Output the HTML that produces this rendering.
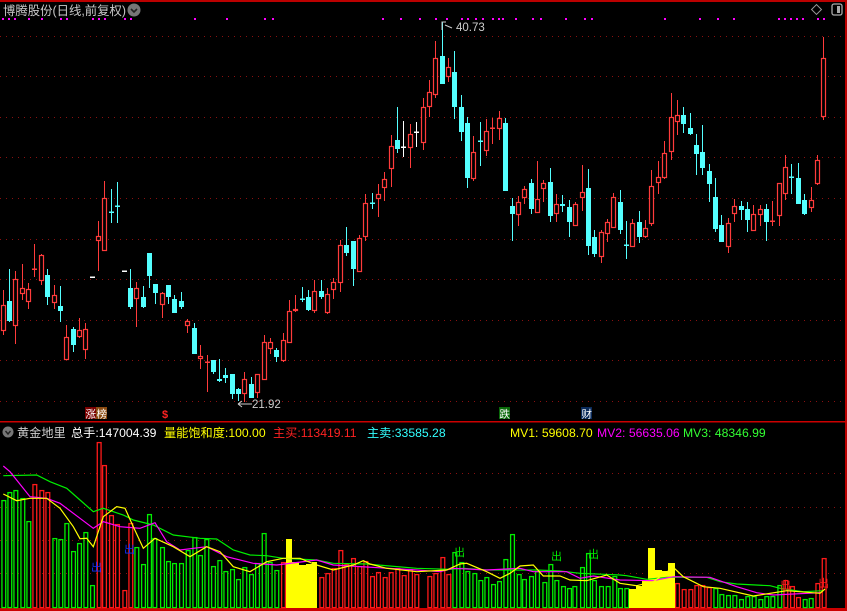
<!DOCTYPE html>
<html><head><meta charset="utf-8"><style>
html,body{margin:0;padding:0;background:#000;width:847px;height:611px;overflow:hidden}
svg{display:block}
text{font-family:"Liberation Sans","Noto Sans CJK SC",sans-serif}
</style></head><body>
<svg id="s" width="847" height="611" viewBox="0 0 847 611" xmlns="http://www.w3.org/2000/svg">
<rect width="847" height="611" fill="#000"/>
<rect x="0" y="0" width="847" height="2" fill="#b00"/>
<rect x="845" y="0" width="2" height="611" fill="#b00"/>
<rect x="0" y="421" width="847" height="1.5" fill="#c00"/>
<rect x="0" y="608" width="847" height="3" fill="#c00"/>
<g id="grid" stroke="#8a1010" stroke-width="1" stroke-dasharray="1,5"></g>
<text x="3" y="15" font-size="12.5" fill="#c8c8c8" textLength="123" lengthAdjust="spacingAndGlyphs">博腾股份(日线,前复权)</text>
<circle cx="134" cy="10" r="6.5" fill="#777"/>
<path d="M131 9 L134 12 L137 9" stroke="#222" stroke-width="1.6" fill="none"/>
<rect x="813" y="6" width="7" height="7" fill="none" stroke="#999" transform="rotate(45 816.5 9.5)"/>
<rect x="832" y="4" width="10" height="11" rx="2" fill="none" stroke="#aaa" stroke-width="1.3"/>
<rect x="837" y="6" width="3" height="7" fill="#aaa"/>
<g id="dots" fill="#ff00ff"></g>
<g id="candles"></g>
<g id="vol"></g>
<path d="M442 30 L442 22 L446 22 M445 25 L452 28" stroke="#ccc" fill="none"/>
<text x="456" y="31" font-size="11.5" fill="#ccc">40.73</text>
<path d="M238 404 L252 404 M238 404 L242 401 M238 404 L242 407" stroke="#ccc" fill="none"/>
<text x="252" y="408" font-size="11.5" fill="#ccc">21.92</text>
<rect x="85" y="407" width="11" height="12" fill="#7a0000"/><text x="85.5" y="417.5" font-size="10.5" fill="#fff">涨</text>
<rect x="96" y="407" width="11" height="12" fill="#8a4a10"/><text x="96.5" y="417.5" font-size="10.5" fill="#fff">榜</text>
<text x="162" y="418" font-size="11" fill="#f22" font-weight="bold">$</text>
<rect x="499" y="407" width="11" height="12" fill="#0a6a0a"/><text x="499.5" y="417.5" font-size="10.5" fill="#fff">跌</text>
<rect x="581" y="407" width="11" height="12" fill="#0a2a5a"/><text x="581.5" y="417.5" font-size="10.5" fill="#fff">财</text>
<circle cx="8" cy="432" r="5.5" fill="#777"/>
<path d="M5.5 431 L8 434 L10.5 431" stroke="#222" stroke-width="1.4" fill="none"/>
<g font-size="12.2">
<text x="17" y="437" fill="#ccc">黄金地里</text>
<text x="71" y="437" fill="#fff">总手:147004.39</text>
<text x="164" y="437" fill="#ff0">量能饱和度:100.00</text>
<text x="273" y="437" fill="#f22">主买:113419.11</text>
<text x="367" y="437" fill="#3ff">主卖:33585.28</text>
<text x="510" y="437" fill="#ff0">MV1: 59608.70</text>
<text x="597" y="437" fill="#f0f">MV2: 56635.06</text>
<text x="683" y="437" fill="#3f3">MV3: 48346.99</text>
</g>
</svg>
<script>
var NS="http://www.w3.org/2000/svg";
function el(p,t,a){var e=document.createElementNS(NS,t);for(var k in a)e.setAttribute(k,a[k]);document.getElementById(p).appendChild(e);return e;}
[36,76,117,157,198,239,279,320,360,401,473,507,540,573].forEach(function(y){el("grid","line",{x1:0,y1:y+.5,x2:845,y2:y+.5});});
var dx=[2,8,14,28,41,60,66,92,98,104,124,130,194,226,264,272,382,400,419,435,446,461,467,475,482,492,498,502,515,532,540,565,584,591,664,699,717,733,778,784,790,796,802,817,823];
dx.forEach(function(x){el("dots","rect",{x:x,y:18,width:2,height:2});});
var C=[
[3.3,"r",305,331,290,335],[9.3,"c",301,321,269,322],[15.3,"r",279,326,271,344],[22.3,"r",288,294,264,300],[28.3,"r",289,302,283,309],[34.3,"r",269,269,244,277],[41.3,"r",255,281,254,285],[47.3,"c",275,297,269,305],[54.3,"r",295,303,285,309],[60.3,"c",306,311,286,322],[66.3,"r",337,360,325,360],[73.3,"c",329,345,327,352],[79.3,"r",330,337,318,338],[85.3,"r",329,350,323,359],[91.7,"w",277,277,277,277],[98.3,"r",236,241,221,271],[104.3,"r",198,251,181,251],[111.3,"c",212,212,189,223],[117.3,"c",206,206,182,223],[123.7,"w",271,271,271,271],[130.3,"c",288,307,269,309],[136.3,"r",288,299,282,327],[143.3,"c",297,307,286,308],[149.3,"c",253,276,253,288],[155.3,"c",284,293,284,304],[162.3,"r",293,305,292,318],[168.3,"c",285,297,285,304],[174.3,"c",299,313,295,313],[181.3,"c",301,307,292,309],[187.3,"r",321,326,319,333],[194.3,"c",328,354,323,354],[200.3,"r",356,359,345,369],[206.7,"r",362,362,355,392],[213.3,"c",360,372,360,374],[219.3,"c",379,381,359,382],[225.3,"c",375,378,368,383],[232.3,"c",374,394,374,399],[238.3,"c",389,394,388,401],[244.3,"r",379,394,372,402],[251.3,"c",384,398,377,398],[257.3,"r",374,393,374,398],[263.7,"r",342,380,335,380],[270.3,"r",342,349,338,354],[276.3,"c",350,357,348,362],[283.3,"r",340,361,333,362],
[289.3,"r",311,343,300,343],[295.3,"r",309,311,295,312],[301.7,"c",299,299,287,302],[308.3,"c",297,310,290,311],[314.3,"r",291,311,280,313],[321.3,"c",291,297,280,299],[327.3,"r",294,313,288,314],[333.3,"r",282,290,278,299],[340.3,"r",245,283,240,292],[346.3,"c",245,253,227,256],[353.3,"c",241,269,241,286],[359.3,"r",238,272,235,272],[365.3,"r",203,237,194,241],[372.3,"c",203,203,193,209],[378.3,"r",194,199,184,217],[384.3,"r",179,188,172,201],[391.3,"r",146,169,135,187],[397.3,"c",140,149,107,153],[403.3,"w",147,147,121,157],[410.3,"r",134,148,124,168],[416.3,"w",132,132,122,147],[423.3,"r",107,143,98,150],[429.3,"r",92,107,80,117],[435.3,"r",58,95,41,98],[442.3,"c",56,84,22,84],[448.3,"r",67,77,58,82],[454.3,"c",72,107,51,119],[461.3,"c",107,132,95,141],[467.3,"c",123,178,117,188],[473.3,"r",152,179,136,181],[480.3,"c",141,141,122,166],[486.3,"r",131,151,119,156],[492.3,"r",128,128,118,144],[499.3,"r",118,129,111,140],[505.3,"c",123,191,118,191],[512.3,"c",206,214,198,241],[518.3,"r",202,215,196,226],[524.3,"r",189,198,186,204],[531.3,"c",183,209,179,214],[537.3,"r",199,213,161,213],[543.3,"r",183,189,180,202],[550.3,"c",182,216,168,222],[556.3,"r",204,214,194,222],[562.3,"c",204,206,195,212],
[569.3,"c",207,222,200,237],[575.3,"r",204,226,202,226],[582.3,"r",192,198,165,211],[588.3,"c",188,246,169,255],[594.3,"c",237,254,230,257],[601.3,"r",232,257,230,263],[607.3,"r",222,234,219,242],[613.3,"r",197,228,193,228],[620.3,"c",202,230,190,234],[626.3,"c",245,245,221,259],[632.3,"r",223,247,219,247],[639.3,"c",222,237,211,243],[645.3,"r",228,237,220,238],[651.3,"r",186,224,170,226],[658.3,"r",177,183,161,194],[664.3,"r",153,178,141,179],[671.3,"r",117,152,93,160],[677.3,"r",115,122,100,135],[683.3,"c",115,124,107,133],[690.3,"c",128,134,113,135],[696.3,"c",145,154,134,175],[702.3,"c",152,168,125,175],[709.3,"c",171,184,164,202],[715.3,"c",197,229,178,232],[721.3,"c",225,242,215,242],[728.3,"r",223,247,218,253],[734.3,"r",206,214,199,222],[741.3,"c",206,210,201,220],[747.3,"c",209,220,202,232],[753.3,"r",214,231,205,231],[760.3,"r",209,215,205,226],[766.3,"c",209,222,204,241],[772.3,"r",221,221,201,226],[779.3,"r",183,216,183,226],[785.3,"r",167,194,155,200],[791.3,"c",177,177,164,194],[798.3,"c",178,204,163,204],[804.3,"c",200,214,194,215],[811.3,"r",200,208,187,212],[817.3,"r",160,184,155,185],[823.3,"r",58,117,37,120]];
var col={r:"#ff3b3b",c:"#54ffff",w:"#ffffff"};
C.forEach(function(c){var x=Math.round(c[0])+.5,k=col[c[1]];
 if(c[5]>c[4])el("candles","line",{x1:x,y1:c[4],x2:x,y2:c[5],stroke:k,"stroke-width":1});
 if(c[3]-c[2]<2){el("candles","rect",{x:x-2.5,y:c[2]-.5,width:5,height:1.5,fill:k});}
 else if(c[1]=="r"){el("candles","rect",{x:x-2,y:c[2]+.5,width:4,height:c[3]-c[2]-1,fill:"#000",stroke:k,"stroke-width":1.2});}
 else el("candles","rect",{x:x-2.5,y:c[2],width:5,height:c[3]-c[2],fill:k});
});
var VA=[[4,500,"g"],[22,492,"g"],[40,490,"g"],[61,498,"g"],[79,521,"g"],[97,484,"r"],[118,490,"r"],[136,492,"r"],[157,538,"g"],[175,539,"g"],[193,523,"g"],[213,551,"g"],[231,543,"g"],[250,532,"g"],[270,585,"g"],[290,442,"r"],[306,465,"r"],[327,515,"r"],[345,524,"r"],[367,590,"r"],[385,523,"r"],[403,547,"g"],[423,564,"g"],[441,514,"g"],[457,538,"g"],[480,547,"g"],[498,561,"g"],[516,563,"g"],[537,563,"g"],[557,550,"g"],[577,537,"g"],[594,555,"g"],[613,539,"g"],[633,566,"g"],[652,560,"g"],[670,571,"g"],[690,569,"g"],[708,579,"g"],[727,567,"g"],[747,574,"g"],[765,563,"g"],[785,533,"g"],[803,562,"g"],[823,570,"g"],[843,562,"r"],
[958,577,"r"],[976,573,"r"],[995,568,"r"],[1015,550,"r"],[1033,564,"r"],[1053,558,"r"],[1072,566,"r"],[1090,561,"r"],[1110,576,"r"],[1128,572,"r"],[1148,577,"r"],[1166,572,"r"],[1186,568,"r"],[1205,575,"r"],[1224,569,"r"],[1243,574,"r"]];
var VB=[[22,576,"r"],[40,573,"r"],[61,557,"r"],[79,574,"r"],[97,552,"g"],[118,562,"g"],[136,571,"g"],[157,573,"g"],[175,580,"g"],[193,577,"g"],[213,584,"g"],[231,581,"g"],[250,559,"g"],[270,534,"g"],[290,574,"g"],[306,579,"g"],[327,576,"g"],[345,571,"g"],[367,582,"g"],[385,564,"g"],[403,580,"g"],[423,586,"g"],[441,588,"g"],[457,586,"g"],[480,567,"g"],[498,553,"g"],[516,580,"g"],[537,586,"g"],[557,586,"g"],[577,576,"g"],[594,588,"g"],[613,588,"g"],
[765,583,"r"],[785,589,"r"],[805,589,"r"],[823,585,"r"],[841,585,"r"],[860,587,"r"],[880,588,"g"],[898,594,"g"],[918,595,"g"],[937,595,"g"],[957,599,"g"],[976,596,"g"],[995,596,"g"],[1015,599,"g"],[1033,596,"g"],[1051,596,"g"],[1072,585,"g"],[1090,580,"r"],[1110,586,"r"],[1128,597,"r"],[1148,599,"g"],[1166,598,"g"],[1186,583,"r"],[1205,558,"r"]];
var vc={g:"#00ee00",r:"#ff1a1a"};
function bar(x,t,k){el("vol","rect",{x:x+.6,y:t+.6,width:3.8,height:607-t,fill:"none",stroke:vc[k],"stroke-width":1.3});}
VA.forEach(function(b){bar(b[0]/3,b[1],b[2]);});
VB.forEach(function(b){bar(420+b[0]/3,b[1],b[2]);});
[[286,539,6],[292,562,7],[299,565,7],[306,562,6],[311,562,6],[629,589,7],[636,586,6],[642,580,6],[648,548,7],[655,570,7],[662,571,6],[668,563,7]].forEach(function(b){el("vol","rect",{x:b[0],y:b[1],width:b[2],height:608-b[1],fill:"#ffff00"});});
el("vol","rect",{x:300,y:560,width:12,height:4,fill:"#000"});
function line(ptsA,ptsB,k){var p=[];ptsA.forEach(function(q){p.push((q[0]/3).toFixed(1)+","+(440+q[1]/3).toFixed(1));});ptsB.forEach(function(q){p.push((420+q[0]/3).toFixed(1)+","+(440+q[1]/3).toFixed(1));});el("vol","polyline",{points:p.join(" "),fill:"none",stroke:k,"stroke-width":1.2});}
line([[10,107],[110,105],[150,125],[200,145],[240,180],[280,215],[310,205],[370,225],[400,240],[460,255],[520,285],[600,295],[650,297],[700,330],[750,345],[800,347],[850,355],[950,360],[1000,370],[1100,372],[1250,385]],[[90,388],[130,385],[200,390],[350,390],[420,393],[480,400],[600,405],[620,407],[680,418],[740,412],[860,412],[900,425],[950,432],[1050,437],[1080,445],[1150,455],[1210,452]],"#00ee00");
line([[10,78],[30,95],[90,170],[140,175],[180,190],[240,235],[280,265],[310,245],[360,260],[420,265],[465,248],[500,305],[540,330],[620,320],[680,350],[760,370],[830,375],[950,360],[1000,375],[1250,390]],[[60,395],[100,385],[200,390],[300,385],[340,395],[440,395],[480,415],[520,408],[600,420],[700,422],[760,410],[870,412],[950,440],[1010,458],[1060,465],[1200,458]],"#ff00ff");
line([[10,162],[50,182],[90,175],[140,175],[180,205],[220,260],[240,296],[260,295],[280,320],[310,230],[350,200],[375,205],[400,260],[430,325],[465,295],[520,320],[570,350],[620,320],[660,335],[700,380],[750,395],[800,365],[850,355],[900,355],[950,375],[1000,390],[1060,375],[1090,362],[1110,372],[1160,385],[1250,395]],[[80,390],[120,372],[140,370],[200,395],[240,415],[270,400],[300,378],[340,375],[370,408],[420,408],[450,420],[500,422],[560,405],[600,430],[650,437],[700,425],[760,382],[790,410],[850,440],[900,445],[1000,468],[1100,452],[1200,460],[1215,447]],"#ffff00");
function mk(x,y,k){var t=el("vol","text",{x:x,y:y,"font-size":11,fill:k});t.textContent="出";}
mk(91,571,"#1030ff");mk(124,553,"#1030ff");mk(454,556,"#00ee00");mk(551,560,"#00ee00");mk(588,558,"#00ee00");mk(780,589,"#ff1a1a");mk(818,587,"#ff1a1a");
</script>
</body></html>
